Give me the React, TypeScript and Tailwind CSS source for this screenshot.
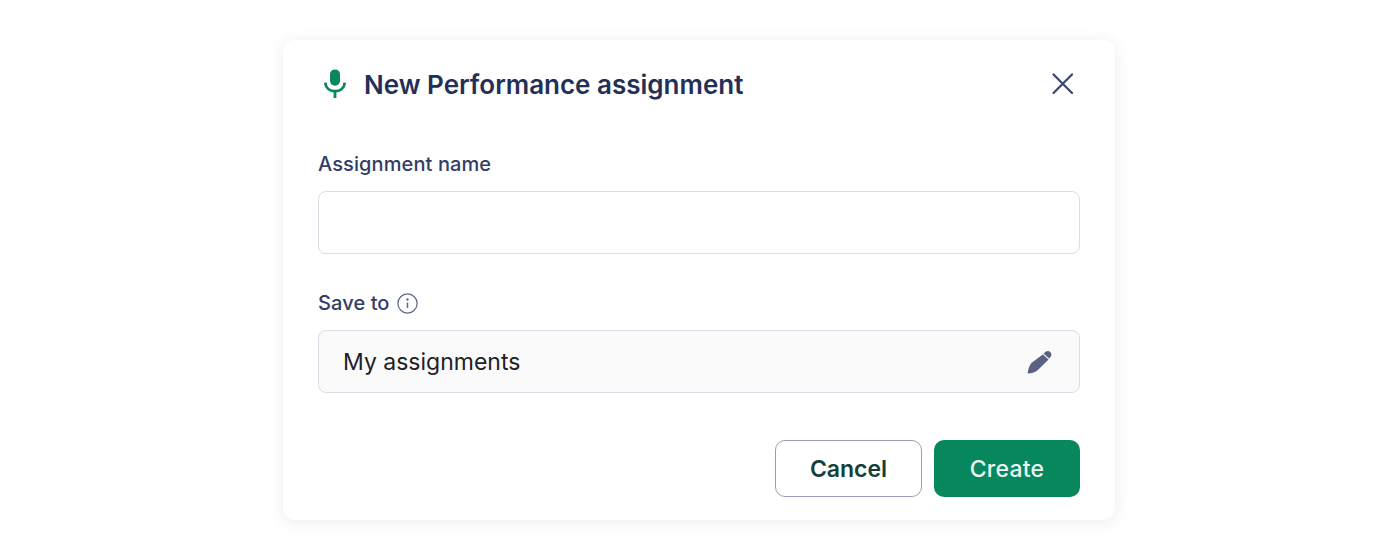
import React from 'react';

const App: React.FC = () => {
  return (
    <div className="w-[1400px] h-[560px] bg-white flex justify-center pt-10 pr-[2px] font-['Inter',sans-serif] overflow-hidden">
      <div className="w-[832px] h-[480px] bg-white rounded-xl shadow-[0_2px_16px_rgba(40,45,80,0.09)] pl-[35px] pr-[35px] pt-[26px] flex flex-col">
        <div className="flex items-center justify-between h-9">
          <div className="flex items-center gap-[17px] ml-[5px]">
            <svg width="24" height="30" viewBox="0 0 24 30" fill="none">
              <rect x="7" y="0.4" width="10" height="16.4" rx="5" fill="#0A875E" />
              <path d="M2.2 13.6c.6 5.6 4.6 8.6 9.8 8.6s9.2-3 9.8-8.6" stroke="#0A875E" strokeWidth="2.8" />
              <rect x="10.6" y="22" width="2.8" height="7" fill="#0A875E" />
            </svg>
            <h2 className="text-[26px] leading-9 pt-[1px] font-semibold text-[#242f57]">New Performance assignment</h2>
          </div>
          <button type="button" className="mr-[5px]">
            <svg width="24" height="24" viewBox="0 0 24 24" fill="none" stroke="#3a4670" strokeWidth="2.2" strokeLinecap="round">
              <path d="M2.5 2.5 21 21M21 2.5 2.5 21" />
            </svg>
          </button>
        </div>

        <label className="block mt-[48px] text-[20px] leading-7 tracking-[0.1px] font-medium text-[#323c66]">Assignment name</label>
        <input
          type="text"
          className="mt-[13px] h-[63px] w-full bg-white border border-[#dcdde8] rounded-lg px-6 outline-none"
        />

        <div className="flex items-center gap-[7px] mt-[35px] h-7">
          <span className="text-[20px] leading-7 tracking-[0.1px] font-medium text-[#323c66]">Save to</span>
          <svg width="21" height="21" viewBox="0 0 21 21" fill="none" stroke="#5e6688" strokeWidth="1.2">
            <circle cx="10.5" cy="10.5" r="9.6" />
            <path d="M10.5 9.5v5.5" strokeWidth="1.5" />
            <circle cx="10.5" cy="6.5" r="0.6" fill="#5e6688" />
          </svg>
        </div>
        <div className="mt-[13px] h-[63px] w-full bg-[#fafafb] border border-[#dcdde8] rounded-lg pl-6 pr-[26px] flex items-center justify-between">
          <span className="text-[23px] text-[#1f2126] pt-[2px]">My assignments</span>
          <svg width="26" height="26" viewBox="0 1 26 26" fill="#5a6182">
            <path d="M15.8 6.4 21.6 11.6 11.4 21.4C8.8 23.8 5 25.4.6 25.6 1 21 2.6 17 5 14.6z" />
            <path d="M17.4 5c1.6-2 4-2.6 5.8-1s1.6 4.2-.4 6l-.6.6-5.6-4.8z" />
          </svg>
        </div>

        <div className="flex justify-end gap-3 mt-[47px]">
          <button type="button" className="w-[147px] h-[57px] pt-[2px] bg-white border-[1.5px] border-[#9a9eb9] rounded-[10px] text-[23px] font-semibold text-[#143f38]">
            Cancel
          </button>
          <button type="button" className="w-[146px] h-[57px] pt-[2px] bg-[#06875d] rounded-[10px] text-[23px] tracking-[0.2px] font-medium text-[#eef7f3]">
            Create
          </button>
        </div>
      </div>
    </div>
  );
};

export default App;
